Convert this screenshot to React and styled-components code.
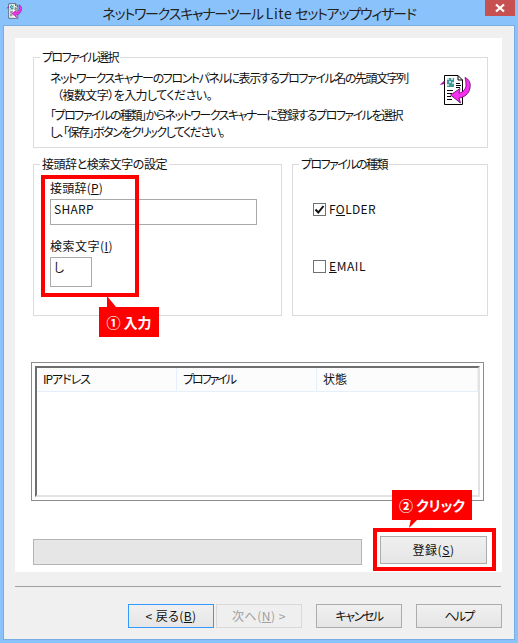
import React from "react";
import styled, { createGlobalStyle } from "styled-components";

const Global = createGlobalStyle`
  html, body { margin: 0; padding: 0; }
  body {
    font-family: "Noto Sans CJK JP", "Noto Sans", sans-serif;
    font-size: 12px;
    font-feature-settings: "palt";
    color: #111;
  }
  * { box-sizing: border-box; }
`;

const Win = styled.div`
  position: relative;
  width: 518px;
  height: 643px;
  background: #8ac3fb;
  display: flex;
  flex-direction: column;
  overflow: hidden;
`;
const TitleBar = styled.div`
  height: 25px;
  flex: none;
  display: flex;
  align-items: center;
  justify-content: center;
  position: relative;
`;
const Title = styled.div`
  font-size: 14px;
  color: #222;
  letter-spacing: -1.2px;
  word-spacing: 1px;
`;
const TitleLatin = styled.span`
  letter-spacing: 0.5px;
`;
const TitleIcon = styled.div`
  position: absolute;
  left: 6px;
  top: 3px;
  line-height: 0;
`;
const Close = styled.div`
  position: absolute;
  right: 3px;
  top: 0;
  width: 30px;
  height: 16px;
  background: #c75050;
  display: flex;
  align-items: center;
  justify-content: center;
`;
const Client = styled.div`
  margin: 0 3px;
  height: 615px;
  flex: none;
  background: #f0f0f0;
  border: 1px solid #79aee3;
  padding: 12px 12px 0 11px;
  display: flex;
  flex-direction: column;
`;
const Panel = styled.div`
  background: #fff;
  height: 534px;
  flex: none;
  padding: 19px 14px 0 18px;
  display: flex;
  flex-direction: column;
`;
const Group = styled.div`
  position: relative;
  border: 1px solid #dcdcdc;
  height: ${(p) => p.$h}px;
  width: ${(p) => p.$w}px;
  flex: none;
`;
const Legend = styled.div`
  position: absolute;
  top: -10px;
  left: 6px;
  padding: 0 2px;
  background: #fff;
  line-height: 18px;
  white-space: nowrap;
  letter-spacing: ${(p) => p.$ls}px;
`;
const Intro = styled.div`
  padding: 11px 0 0 16px;
  display: flex;
  flex-direction: column;
  gap: 3px;
`;
const Para = styled.p`
  margin: 0 0 0 ${(p) => p.$indent || 0}px;
  line-height: 17px;
  white-space: nowrap;
  letter-spacing: ${(p) => p.$ls}px;
`;
const BigIcon = styled.div`
  position: absolute;
  left: 405px;
  top: 16px;
  line-height: 0;
`;
const Row = styled.div`
  display: flex;
  gap: 10px;
  margin-top: 16px;
`;
const Settings = styled.div`
  padding: 14px 0 0 16px;
  display: flex;
  flex-direction: column;
`;
const Label = styled.div`
  line-height: 18px;
  letter-spacing: ${(p) => p.$ls}px;
`;
const Input = styled.div`
  width: ${(p) => p.$w}px;
  height: ${(p) => p.$h}px;
  border: 1px solid #aaa;
  padding: 0 3px;
  line-height: 17px;
  letter-spacing: 0.3px;
  margin: 2px 0 12px;
  background: #fff;
`;
const Checks = styled.div`
  padding: 37px 0 0 20px;
  display: flex;
  flex-direction: column;
  gap: 43px;
`;
const Check = styled.div`
  display: flex;
  align-items: center;
  gap: 3px;
  line-height: 14px;
`;
const CheckText = styled.span`
  letter-spacing: ${(p) => p.$ls}px;
`;
const Box = styled.div`
  width: 13px;
  height: 13px;
  border: 1px solid #707070;
  background: #fff;
  display: flex;
  align-items: center;
  justify-content: center;
`;
const ListOuter = styled.div`
  width: 453px;
  height: 139px;
  margin: 46px 0 0 -2px;
  border: 1px solid #8c8c8c;
  padding: 3px;
  flex: none;
`;
const ListInner = styled.div`
  height: 100%;
  border-style: solid;
  border-width: 2px;
  border-color: #6e6e6e #e3e3e3 #e3e3e3 #6e6e6e;
  background: #fff;
`;
const Head = styled.div`
  display: grid;
  grid-template-columns: 140px 140px 1fr;
  height: 24px;
  background: #fcfcfc;
  border-bottom: 1px solid #e5f0fc;
`;
const HeadCell = styled.div`
  padding-left: 6px;
  line-height: 21px;
  border-right: 1px solid #e5f0fc;
  letter-spacing: ${(p) => p.$ls}px;
`;
const Bottom = styled.div`
  display: flex;
  gap: 18px;
  margin-top: 35px;
  align-items: flex-start;
`;
const Progress = styled.div`
  width: 329px;
  height: 26px;
  margin-top: 3px;
  background: #e6e6e6;
  border: 1px solid #b4b4b4;
`;
const Btn = styled.div`
  width: ${(p) => p.$w}px;
  height: ${(p) => p.$h}px;
  display: flex;
  align-items: center;
  justify-content: center;
  padding-bottom: 1px;
  white-space: pre;
  letter-spacing: ${(p) => p.$ls}px;
  border: 1px solid ${(p) => (p.$focus ? "#3399ff" : p.$off ? "#d9d9d9" : "#acacac")};
  color: ${(p) => (p.$off ? "#a0a0a0" : "#111")};
  background: ${(p) => (p.$off ? "#efefef" : "linear-gradient(#f0f0f0, #e5e5e5)")};
`;
const Sep = styled.div`
  height: 1px;
  background: #a0a0a0;
  margin-top: 14px;
  flex: none;
  width: 486px;
`;
const Footer = styled.div`
  display: flex;
  justify-content: flex-end;
  margin-top: 17px;
`;
const FooterGap = styled.div`
  width: ${(p) => p.$w}px;
`;
const RedBox = styled.div`
  position: absolute;
  left: ${(p) => p.$x}px;
  top: ${(p) => p.$y}px;
  width: ${(p) => p.$w}px;
  height: ${(p) => p.$h}px;
  border: 4px solid #f00;
`;
const Callout = styled.div`
  position: absolute;
  left: ${(p) => p.$x}px;
  top: ${(p) => p.$y}px;
  width: ${(p) => p.$w}px;
  height: 30px;
  background: #f00;
  color: #fff;
  font-weight: 700;
  font-size: 14px;
  display: flex;
  align-items: center;
  justify-content: center;
  white-space: pre;
`;
const Tail = styled.svg`
  position: absolute;
  left: ${(p) => p.$x}px;
  top: ${(p) => p.$y}px;
`;

const DocIcon = ({ size }) => (
  <svg width={size} height={size} viewBox="0 0 32 32">
    <path d="M5.500 1.500H19L23.500 6V30.500H5.500Z" fill="#fff" stroke="#000" />
    <path d="M19 1.500V6H23.500" fill="none" stroke="#000" />
    <rect x="8" y="4" width="7" height="9" fill="#3f9a9a" />
    <path d="M8 4h2v2H8zM12 4h2v2h-2zM10 7h2v2h-2zM13 8h2v2h-2zM8 10h2v2H8z" fill="#bfe0e0" />
    <path d="M17 9.500h4M17 11.500h5M17 13.500h4M8 16.500h6M8 19.500h5M8 22.500h4M8 25.500h5" stroke="#000" strokeWidth="1" />
    <path d="M0.500 11L5.500 6.500V10Z" fill="#a018a0" />
    <path
      d="M26 3.500C30 5 32 9 31 14C30 20 25 23.500 20 24L21.500 29L11.500 21L21 14.500L20 19C24 18.500 27 15 27 11C27 8 26.500 5.500 26 3.500Z"
      fill="#f530f0"
      stroke="#600060"
      strokeWidth="0.800"
    />
  </svg>
);

const U = styled.u``;

export default function App() {
  return (
    <Win>
      <Global />
      <TitleBar>
        <TitleIcon>
          <DocIcon size={16} />
        </TitleIcon>
        <Title>ネットワークスキャナーツール <TitleLatin>Lite</TitleLatin> セットアップウィザード</Title>
        <Close>
          <svg width="10" height="10" viewBox="0 0 10 10">
            <path d="M1 1.500L9 8.500M9 1.500L1 8.500" stroke="#fff" strokeWidth="2.200" />
          </svg>
        </Close>
      </TitleBar>
      <Client>
        <Panel>
          <Group $w={455} $h={91}>
            <Legend $ls={-1.54}>プロファイル選択</Legend>
            <Intro>
              <div>
                <Para $ls={-1.42}>ネットワークスキャナーのフロントパネルに表示するプロファイル名の先頭文字列</Para>
                <Para $ls={-0.56} $indent={7}>（複数文字）を入力してください。</Para>
              </div>
              <div>
                <Para $ls={-1.49}>「プロファイルの種類」からネットワークスキャナーに登録するプロファイルを選択</Para>
                <Para $ls={-1.51}>し、「保存」ボタンをクリックしてください。</Para>
              </div>
            </Intro>
            <BigIcon>
              <DocIcon size={32} />
            </BigIcon>
          </Group>
          <Row>
            <Group $w={249} $h={152}>
              <Legend $ls={-0.47}>接頭辞と検索文字の設定</Legend>
              <Settings>
                <Label $ls={0.21}>接頭辞(<U>P</U>)</Label>
                <Input $w={207} $h={26}>SHARP</Input>
                <Label $ls={0.48}>検索文字(<U>I</U>)</Label>
                <Input $w={42} $h={30}>し</Input>
              </Settings>
            </Group>
            <Group $w={196} $h={152}>
              <Legend $ls={-1.54}>プロファイルの種類</Legend>
              <Checks>
                <Check>
                  <Box>
                    <svg width="11" height="11" viewBox="0 0 11 11">
                      <path d="M1.500 5.500L4.300 8.500L9.500 2" fill="none" stroke="#111" strokeWidth="2" />
                    </svg>
                  </Box>
                  <CheckText $ls={0.36}>F<U>O</U>LDER</CheckText>
                </Check>
                <Check>
                  <Box />
                  <CheckText $ls={0.57}><U>E</U>MAIL</CheckText>
                </Check>
              </Checks>
            </Group>
          </Row>
          <ListOuter>
            <ListInner>
              <Head>
                <HeadCell $ls={-1.03}>IPアドレス</HeadCell>
                <HeadCell $ls={-2.05}>プロファイル</HeadCell>
                <HeadCell $ls={0}>状態</HeadCell>
              </Head>
            </ListInner>
          </ListOuter>
          <Bottom>
            <Progress />
            <Btn $w={107} $h={28} $ls={0.55}>登録(<U>S</U>)</Btn>
          </Bottom>
        </Panel>
        <Sep />
        <Footer>
          <Btn $w={86} $h={24} $ls={0.41} $focus>{"< 戻る("}<U>B</U>)</Btn>
          <FooterGap $w={2} />
          <Btn $w={86} $h={24} $ls={0.52} $off>次へ(<U>N</U>{") >"}</Btn>
          <FooterGap $w={14} />
          <Btn $w={86} $h={24} $ls={-1.48}>キャンセル</Btn>
          <FooterGap $w={14} />
          <Btn $w={86} $h={24} $ls={-1.81}>ヘルプ</Btn>
        </Footer>
      </Client>

      <RedBox $x={41} $y={175} $w={98} $h={122} />
      <Tail $x={105} $y={296} width="12" height="12" viewBox="0 0 12 12">
        <path d="M2 0L11 11H2Z" fill="#f00" />
      </Tail>
      <Callout $x={99} $y={307} $w={60}>① 入力</Callout>

      <RedBox $x={373} $y={528} $w={123} $h={43} />
      <Tail $x={408} $y={519} width="12" height="10" viewBox="0 0 12 10">
        <path d="M1 9L3 0H10Z" fill="#f00" />
      </Tail>
      <Callout $x={392} $y={490} $w={80}>② クリック</Callout>
    </Win>
  );
}
